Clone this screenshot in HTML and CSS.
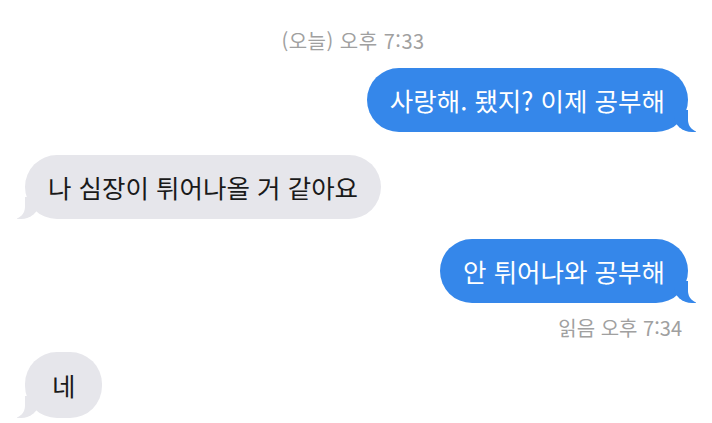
FILE: index.html
```html
<!DOCTYPE html>
<html lang="ko">
<head>
<meta charset="utf-8">
<link rel="stylesheet" href="styles.css">
</head>
<body>
<div class="chat">
  <div class="stamp">(오늘) 오후 7:33</div>
  <div class="row out r1"><div class="bubble blue">사랑해. 됐지? 이제 공부해</div></div>
  <div class="row in r2"><div class="bubble gray">나 심장이 튀어나올 거 같아요</div></div>
  <div class="row out r3"><div class="bubble blue">안 튀어나와 공부해</div></div>
  <div class="read">읽음 오후 7:34</div>
  <div class="row in r4"><div class="bubble gray short">네</div></div>
</div>
</body>
</html>
```

FILE: styles.css
```css
html, body {
  margin: 0;
  padding: 0;
  background: #ffffff;
}
.chat {
  width: 712px;
  height: 423px;
  overflow: hidden;
  display: flex;
  flex-direction: column;
  font-family: "Noto Sans CJK KR", "Noto Sans", sans-serif;
}
.stamp {
  margin-top: 31px;
  height: 20px;
  line-height: 20px;
  font-size: 20px;
  letter-spacing: 0.5px;
  color: #a0a0a0;
  text-align: center;
  padding-right: 6px;
}
.row {
  display: flex;
}
.row.out {
  justify-content: flex-end;
  padding-right: 24px;
}
.row.in {
  justify-content: flex-start;
  padding-left: 25px;
}
.r1 { margin-top: 17px; }
.r2 { margin-top: 23px; }
.r3 { margin-top: 20px; }
.r4 { margin-top: 14px; padding-left: 22px; }
.bubble {
  position: relative;
  font-size: 25.5px;
  line-height: 34px;
  padding: 15px 23px;
  border-radius: 32px;
  white-space: nowrap;
}
.blue {
  background: #3587ea;
  color: #ffffff;
}
.gray {
  background: #e6e6eb;
  color: #1a1a1a;
}
.short {
  padding: 16px 27px;
}
.blue::before {
  content: "";
  position: absolute;
  right: -8px;
  bottom: 0;
  width: 22px;
  height: 22px;
  background: #3587ea;
  border-bottom-left-radius: 18px 16px;
  z-index: 0;
}
.blue::after {
  content: "";
  position: absolute;
  right: -26px;
  bottom: 0;
  width: 26px;
  height: 22px;
  background: #ffffff;
  border-bottom-left-radius: 12px;
  z-index: 1;
}
.gray::before {
  content: "";
  position: absolute;
  left: -8px;
  bottom: 0;
  width: 22px;
  height: 22px;
  background: #e6e6eb;
  border-bottom-right-radius: 18px 16px;
}
.gray::after {
  content: "";
  position: absolute;
  left: -26px;
  bottom: 0;
  width: 26px;
  height: 22px;
  background: #ffffff;
  border-bottom-right-radius: 12px;
}
.read {
  margin-top: 15px;
  height: 20px;
  line-height: 20px;
  font-size: 20px;
  color: #a0a0a0;
  text-align: right;
  padding-right: 30px;
}
```
